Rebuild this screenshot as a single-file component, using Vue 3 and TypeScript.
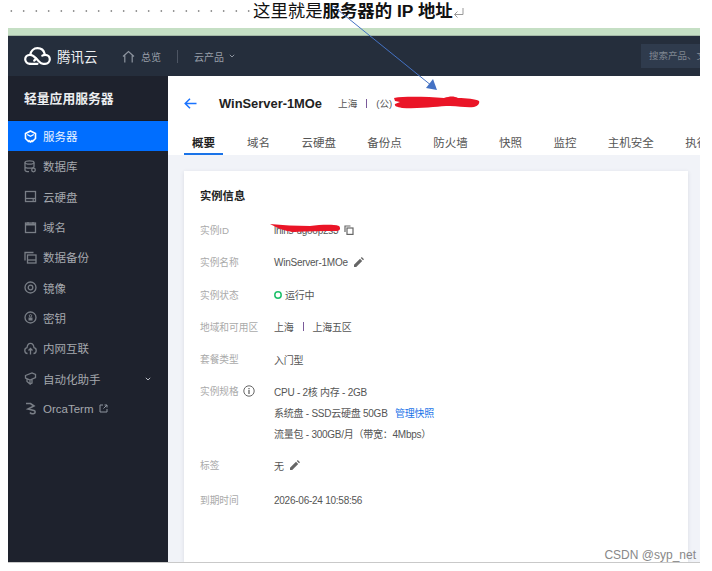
<script setup lang="ts">
interface NavItem {
  label: string
  icon: string
  active?: boolean
  caret?: boolean
  ext?: boolean
}

const navItems: NavItem[] = [
  { label: '服务器', icon: 'server', active: true },
  { label: '数据库', icon: 'db' },
  { label: '云硬盘', icon: 'disk' },
  { label: '域名', icon: 'domain' },
  { label: '数据备份', icon: 'backup' },
  { label: '镜像', icon: 'image' },
  { label: '密钥', icon: 'key' },
  { label: '内网互联', icon: 'net' },
  { label: '自动化助手', icon: 'auto', caret: true },
  { label: 'OrcaTerm', icon: 'orca', ext: true },
]

const tabs = ['概要', '域名', '云硬盘', '备份点', '防火墙', '快照', '监控', '主机安全', '执行命令']
</script>

<template>
  <div class="page">
    <div class="note">
      <span class="dots" />
      <span class="note-text">这里就是<b>服务器的 IP 地址</b></span>
      <svg class="return" width="11" height="11" viewBox="0 0 11 11" fill="none" stroke="#999">
        <path d="M10 1V7.500H1.500M4.500 4.500 1.500 7.500 4.500 10.500" />
      </svg>
    </div>

    <div class="shot">
      <div class="strip" />
      <header class="topbar">
        <div class="logo">
          <svg width="27" height="18" viewBox="0 0 27 18" fill="none" stroke="#fff" stroke-width="2.2" stroke-linecap="round" stroke-linejoin="round">
            <path d="M6 16.800c-2.800 0-4.800-2-4.800-4.500S3.300 7.800 6 7.800c2.600 0 4.400 1.800 6.200 3.800l2.800 3c1.200 1.300 2.300 2.200 4.300 2.200h1.800c2.700 0 4.700-2 4.700-4.500s-2-4.500-4.700-4.500c-1.100 0-2 .3-2.800.8" />
            <path d="M6.300 7.800C6.800 4 9.800 1.200 13.500 1.200c3.500 0 6.300 2.400 7.100 5.500" />
            <path d="M6 16.800h7.500M12.200 11.600l-2 2" />
          </svg>
          <span>腾讯云</span>
        </div>
        <svg class="home" width="13" height="13" viewBox="0 0 13 13" fill="none" stroke="#8d949f" stroke-width="1.200">
          <path d="M1 6.500 6.500 1.500 12 6.500M2.800 5.500V12.500M10.200 5.500V12.500" />
        </svg>
        <span class="top-link">总览</span>
        <i class="top-div" />
        <span class="top-link">云产品</span>
        <svg class="top-caret" width="6" height="4" viewBox="0 0 6 4" fill="none" stroke="#8d949f"><path d="M.8.800 3 3 5.200.800" /></svg>
        <div class="search">搜索产品、文档</div>
      </header>

      <div class="body">
        <aside class="side">
          <div class="side-title">轻量应用服务器</div>
          <ul class="nav">
            <li v-for="item in navItems" :key="item.label" class="nav-item" :class="{ active: item.active }">
              <svg class="nav-icon" width="13" height="13" viewBox="0 0 13 13" fill="none" stroke="currentColor" stroke-width="1.300">
                <template v-if="item.icon === 'server'">
                  <path d="M6.500 1 11.500 3.500V8.500L8.500 11.500H4.500L1.500 8.500V3.500Z" stroke-width="1.600" />
                  <path d="M3.200 4.500 6.500 6.300 9.800 4.500M4.500 10 6.500 12 8.500 10" />
                </template>
                <template v-else-if="item.icon === 'db'">
                  <ellipse cx="5.500" cy="2.500" rx="4.500" ry="1.700" />
                  <path d="M1 2.500V10c0 1 1.500 1.700 4 1.700M1 6.500c0 1 2 1.700 4.500 1.700s4.500-.7 4.500-1.700V2.500" />
                  <circle cx="9.500" cy="10" r="1.800" />
                </template>
                <template v-else-if="item.icon === 'disk'">
                  <rect x="1.500" y="1.500" width="10" height="10" />
                  <path d="M1.500 8.500h10" />
                  <path d="M8.500 10h1.500" />
                </template>
                <template v-else-if="item.icon === 'domain'">
                  <rect x="1.500" y="2" width="10" height="9.500" />
                  <path d="M1.500 3.500h10" stroke-width="2" />
                  <path d="M4 1v2M9 1v2" />
                </template>
                <template v-else-if="item.icon === 'backup'">
                  <path d="M1 9.500V1.500H9.500" />
                  <rect x="3.500" y="4" width="8.500" height="8" />
                  <path d="M3.500 9h8.500" />
                </template>
                <template v-else-if="item.icon === 'image'">
                  <circle cx="6.500" cy="6.500" r="5.500" />
                  <circle cx="6.500" cy="6.500" r="2.300" />
                </template>
                <template v-else-if="item.icon === 'key'">
                  <circle cx="6.500" cy="6.500" r="5.500" />
                  <circle cx="6.500" cy="4.800" r="1.200" stroke-width="1" />
                  <rect x="4.500" y="6.500" width="4" height="3" fill="currentColor" stroke="none" />
                </template>
                <template v-else-if="item.icon === 'net'">
                  <path d="M3.500 11.500C1.800 11.500 .8 10 .8 8.500c0-1.500 1-2.600 2.200-2.800C3.300 3 4.800 1.300 6.500 1.300S9.700 3 10 5.700c1.200.2 2.200 1.300 2.200 2.800s-1 3-2.700 3" />
                  <path d="M6.500 12.500V6.500M4.500 8.500l2-2 2 2" />
                </template>
                <template v-else-if="item.icon === 'auto'">
                  <path d="M1.500 3.500 8 1l3.500 1.500v3L6 8 1.500 6ZM3 7v2.500L6 12V8M6 12l2-1V7" />
                </template>
                <template v-else>
                  <path d="M2 1.500h4.500L10 4 4 7l6 1.500c1.500.5 1.500 2.500 0 3s-3 .5-4-1" stroke-width="1.600" />
                </template>
              </svg>
              <span>{{ item.label }}</span>
              <svg v-if="item.ext" class="ext" width="9" height="9" viewBox="0 0 9 9" fill="none" stroke="#8d949f">
                <path d="M4 1H1V8H8V5M4.500 4.500 8 1M5.500 1H8V3.500" />
              </svg>
              <svg v-if="item.caret" class="caret" width="6" height="4" viewBox="0 0 6 4" fill="none" stroke="#b6bac2"><path d="M.8.800 3 3 5.200.800" /></svg>
            </li>
          </ul>
        </aside>

        <main class="main">
          <div class="head">
            <svg class="back" width="13" height="11" viewBox="0 0 13 11" fill="none" stroke="#1a73ff" stroke-width="1.500">
              <path d="M6 .8 1.200 5.500 6 10.200M1.200 5.500H12.500" />
            </svg>
            <span class="head-title">WinServer-1MOe</span>
            <span class="head-meta">上海</span>
            <i class="sep" />
            <span class="head-meta">(公)</span>
          </div>

          <nav class="tabs">
            <span v-for="(tab, i) in tabs" :key="tab" class="tab" :class="{ on: i === 0 }">{{ tab }}</span>
          </nav>

          <div class="content">
            <section class="card">
              <h3>实例信息</h3>
              <div class="row">
                <span class="label">实例ID</span>
                <span class="value">lhins-ugoop2s3
                  <svg class="tool" width="10" height="10" viewBox="0 0 10 10" fill="none" stroke="#666" stroke-width="1.200"><path d="M1 7V1H6.500" /><rect x="3" y="3" width="6" height="6.400" /></svg>
                </span>
              </div>
              <div class="row">
                <span class="label">实例名称</span>
                <span class="value">WinServer-1MOe
                  <svg class="tool pen" width="10" height="10" viewBox="0 0 10 10" fill="#666"><path d="M0 10V7.800L6 1.800 8.200 4 2.200 10ZM6.800 1 7.800 0 10 2.200 9 3.200Z" /></svg>
                </span>
              </div>
              <div class="row">
                <span class="label">实例状态</span>
                <span class="value">
                  <svg class="dot" width="8" height="8" viewBox="0 0 8 8" fill="none" stroke="#1ec06a" stroke-width="1.500"><circle cx="4" cy="4" r="3.200" /></svg>运行中
                </span>
              </div>
              <div class="row">
                <span class="label">地域和可用区</span>
                <span class="value">上海<i class="sep wide" />上海五区</span>
              </div>
              <div class="row">
                <span class="label">套餐类型</span>
                <span class="value">入门型</span>
              </div>
              <div class="row spec">
                <span class="label">实例规格
                  <svg class="info" width="12" height="12" viewBox="0 0 12 12" fill="none" stroke="#666"><circle cx="6" cy="6" r="5.200" /><path d="M6 5v4M6 3v1.200" stroke-width="1.300" /></svg>
                </span>
                <div class="lines">
                  <span class="value">CPU - 2核 内存 - 2GB</span>
                  <span class="value">系统盘 - SSD云硬盘 50GB <a class="link">管理快照</a></span>
                  <span class="value">流量包 - 300GB/月（带宽：4Mbps）</span>
                </div>
              </div>
              <div class="row tag">
                <span class="label">标签</span>
                <span class="value">无
                  <svg class="tool pen" width="10" height="10" viewBox="0 0 10 10" fill="#666"><path d="M0 10V7.800L6 1.800 8.200 4 2.200 10ZM6.800 1 7.800 0 10 2.200 9 3.200Z" /></svg>
                </span>
              </div>
              <div class="row">
                <span class="label">到期时间</span>
                <span class="value">2026-06-24 10:58:56</span>
              </div>
            </section>
          </div>
        </main>
      </div>
    </div>

    <!-- marks drawn by hand over the screenshot -->
    <svg class="marks" width="712" height="571" viewBox="0 0 712 571">
      <path d="M333 6 432 86" stroke="#4472c4" stroke-width="1" fill="none" />
      <path d="M437 90 426 88 433 79Z" fill="#4472c4" />
      <path d="M394 98c12-2 34-1 50 0 6-2 10-2 14 0 8 0 18 1 21 3 1 2-1 5-5 6-8 1-14-1-24-1-12 0-26 3-48 2-5-1-8-2-7-4l5-2-5-1Z" fill="#ea1527" />
      <path d="M270 224c12 1 26 2 40 2 10-1 22-2 29 0 2 2 1 5-2 5-14 0-30 0-44 1-8-1-16-4-23-8Z" fill="#ea1527" />
    </svg>
    <span class="mark-text">CSDN @syp_net</span>
  </div>
</template>

<style>
body {
  margin: 0;
  background: #fff;
}
</style>

<style scoped>
.page {
  position: relative;
  width: 712px;
  height: 571px;
  overflow: hidden;
  background: #fff;
  font-family: "Liberation Sans", "Noto Sans CJK SC", sans-serif;
}

.note {
  display: flex;
  align-items: center;
  height: 22px;
  padding-left: 10px;
  margin-bottom: 6px;
  color: #111;
  font-size: 17.400px;
  line-height: 22px;
}

.dots {
  width: 243px;
  height: 2px;
  background: radial-gradient(circle, #777 0.9px, transparent 1.1px) -5px 0 / 12.500px 2px repeat-x;
}

.note-text b {
  font-weight: 700;
}

.return {
  margin-top: 2px;
}

.shot {
  width: 692px;
  height: 535px;
  margin-left: 8px;
  display: flex;
  flex-direction: column;
  overflow: hidden;
  border-bottom: 1px solid #c9c9c9;
  box-sizing: border-box;
}

.strip {
  height: 7px;
  flex: none;
  background: #c5dfc4;
  border-bottom: 1px solid #a4b8a6;
}

.topbar {
  display: flex;
  align-items: center;
  flex: none;
  height: 40px;
  background: #252e3c;
  color: #989ea8;
  font-size: 10px;
}

.logo {
  display: flex;
  align-items: center;
  gap: 6px;
  width: 114px;
  padding-left: 16px;
  box-sizing: border-box;
  color: #eef0f2;
  font-size: 13.500px;
}

.home {
  margin-right: 6px;
}

.top-div {
  width: 1px;
  height: 13px;
  margin: 0 16px;
  background: #4d5563;
}

.top-caret {
  margin-left: 5px;
}

.search {
  width: 80px;
  height: 24px;
  margin-left: auto;
  margin-right: -21px;
  padding-left: 8px;
  box-sizing: border-box;
  flex: none;
  overflow: hidden;
  white-space: nowrap;
  background: #2f3b4d;
  color: #7f8691;
  font-size: 9.500px;
  line-height: 24px;
}

.body {
  display: flex;
  flex: 1;
  min-height: 0;
}

.side {
  flex: none;
  width: 160px;
  background: #1e222d;
}

.side-title {
  height: 45px;
  padding-left: 16px;
  box-sizing: border-box;
  color: #eceef0;
  font-size: 12.800px;
  font-weight: 700;
  line-height: 45px;
  border-bottom: 1px solid #191c25;
}

.nav {
  margin: 0;
  padding: 0;
  list-style: none;
}

.nav-item {
  display: flex;
  align-items: center;
  height: 30.300px;
  padding-left: 16px;
  color: #a5a8ae;
  font-size: 11.500px;
}

.nav-item .nav-icon {
  margin-right: 6px;
  color: #797e86;
}

.nav-item.active {
  background: #006eff;
  color: #eaf3ff;
}

.nav-item.active .nav-icon {
  color: #fff;
}

.ext {
  margin-left: 6px;
}

.caret {
  margin-left: auto;
  margin-right: 17px;
}

.main {
  display: flex;
  flex: 1;
  min-width: 0;
  flex-direction: column;
  background: #fff;
}

.head {
  display: flex;
  align-items: center;
  flex: none;
  height: 54px;
  padding-left: 16px;
  color: #555;
  font-size: 9.600px;
}

.back {
  margin-right: 22px;
}

.head-title {
  margin-right: 16px;
  color: #222;
  font-size: 12.900px;
  font-weight: 700;
}

.sep {
  display: inline-block;
  width: 1px;
  height: 9px;
  margin: 0 9px;
  background: #7a5a9a;
}

.tabs {
  display: flex;
  flex: none;
  height: 25px;
  padding-left: 16px;
  overflow: hidden;
  white-space: nowrap;
}

.tab {
  flex: none;
  height: 25px;
  padding: 0 8px;
  margin-right: 15.400px;
  box-sizing: border-box;
  color: #555;
  font-size: 11.500px;
  line-height: 26px;
}

.tab.on {
  margin-right: 16px;
  color: #222;
  font-weight: 700;
  border-bottom: 2px solid #1a73e8;
}

.content {
  flex: 1;
  min-height: 0;
  padding: 16px 12px 0 16px;
  background: #f1f3f8;
}

.card {
  height: 100%;
  padding: 17px 16px 16px;
  box-sizing: border-box;
  background: #fff;
  box-shadow: 0 1px 4px rgba(40, 50, 70, 0.12);
}

.card h3 {
  margin: 0 0 15.500px;
  color: #222;
  font-size: 11.300px;
  font-weight: 700;
  line-height: 16px;
}

.row {
  display: flex;
  align-items: center;
  min-height: 21px;
  margin-bottom: 11.300px;
}

.spec {
  align-items: flex-start;
  margin-bottom: 11px;
}

.tag {
  align-items: flex-start;
  min-height: 24px;
  margin-bottom: 11px;
}

.label {
  display: flex;
  align-items: center;
  flex: none;
  width: 74px;
  height: 21px;
  color: #aaa;
  font-size: 9.700px;
}

.value {
  display: flex;
  align-items: center;
  height: 21px;
  white-space: pre;
  color: #555;
  font-size: 10px;
  letter-spacing: -0.25px;
}

.lines {
  display: flex;
  flex-direction: column;
}

.tool {
  margin-left: 3px;
}

.pen {
  margin-left: 4px;
}

.info {
  margin-left: 4px;
}

.dot {
  margin-right: 3px;
}

.link {
  margin-left: 5px;
  color: #1a73e8;
}

.marks {
  position: absolute;
  top: 0;
  left: 0;
  pointer-events: none;
}

.mark-text {
  position: absolute;
  right: 16px;
  bottom: 9px;
  color: #888;
  font-size: 12px;
}
</style>
